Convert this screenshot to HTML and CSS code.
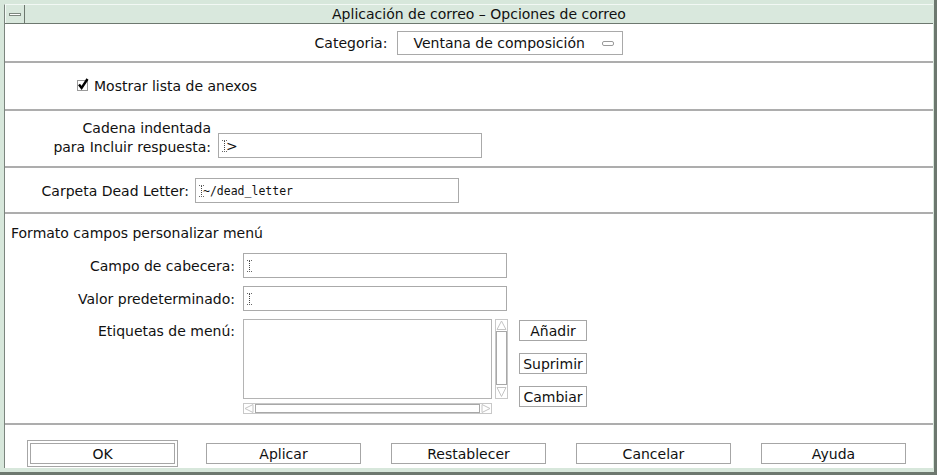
FILE: index.html
```html
<!DOCTYPE html>
<html lang="es">
<head>
<meta charset="utf-8">
<title>Aplicación de correo – Opciones de correo</title>
<link rel="stylesheet" href="styles.css">
</head>
<body>
<div class="window">
  <div class="frame">
    <div class="titlebar">
      <div class="winmenu"><span class="dash"></span></div>
      <div class="title">Aplicación de correo – Opciones de correo</div>
    </div>
    <div class="content">
      <div class="section sec-cat">
        <span class="label">Categoria:</span>
        <div class="dropdown"><span>Ventana de composición</span><span class="indicator"></span></div>
      </div>
      <div class="section sec-check">
        <div class="check">
          <svg class="checkbox" width="14" height="13" viewBox="0 0 14 13"><rect x="0.5" y="2.5" width="10" height="10" fill="#fff" stroke="#9a9a9a"/><path d="M2 6.5 L4.6 10 L10.5 1" fill="none" stroke="#000" stroke-width="2.4"/></svg>
          <span>Mostrar lista de anexos</span>
        </div>
      </div>
      <div class="section sec-indent">
        <div class="label lbl-indent">Cadena indentada<br>para Incluir respuesta:</div>
        <div class="field f264"><svg class="caret" width="5" height="12" viewBox="0 0 5 12"><path d="M0 0.5H5M0 11.5H5" stroke="#666" stroke-dasharray="1 1"/><path d="M2.5 1V11" stroke="#444" stroke-dasharray="1 1"/></svg><span class="ftext">&gt;</span></div>
      </div>
      <div class="section sec-dead">
        <div class="label lbl-dead">Carpeta Dead Letter:</div>
        <div class="field f264"><svg class="caret" width="5" height="12" viewBox="0 0 5 12"><path d="M0 0.5H5M0 11.5H5" stroke="#666" stroke-dasharray="1 1"/><path d="M2.5 1V11" stroke="#444" stroke-dasharray="1 1"/></svg><span class="mono">~/dead_letter</span></div>
      </div>
      <div class="section sec-format">
        <div class="sec-title">Formato campos personalizar menú</div>
        <div class="grid">
          <div class="label glabel">Campo de cabecera:</div>
          <div class="field f264"><svg class="caret" width="5" height="12" viewBox="0 0 5 12"><path d="M0 0.5H5M0 11.5H5" stroke="#666" stroke-dasharray="1 1"/><path d="M2.5 1V11" stroke="#444" stroke-dasharray="1 1"/></svg></div>
          <div class="label glabel">Valor predeterminado:</div>
          <div class="field f264"><svg class="caret" width="5" height="12" viewBox="0 0 5 12"><path d="M0 0.5H5M0 11.5H5" stroke="#666" stroke-dasharray="1 1"/><path d="M2.5 1V11" stroke="#444" stroke-dasharray="1 1"/></svg></div>
          <div class="label glabel top">Etiquetas de menú:</div>
          <div class="listrow">
            <div class="listcol">
              <div class="listbox"></div>
              <svg class="hscroll" width="249" height="11" viewBox="0 0 249 11">
                <rect x="0.5" y="0.5" width="248" height="10" fill="#fff" stroke="#c8c8c8"/>
                <path d="M10 1.5 L2 5.5 L10 9.5 Z" fill="#fff" stroke="#c4c4c4"/>
                <rect x="12.5" y="1.5" width="224" height="8" fill="#fff" stroke="#a8a8a8"/>
                <path d="M239 1.5 L247 5.5 L239 9.5 Z" fill="#fff" stroke="#c4c4c4"/>
              </svg>
            </div>
            <svg class="vscroll" width="13" height="80" viewBox="0 0 13 80">
              <rect x="0.5" y="0.5" width="12" height="79" fill="#fff" stroke="#c8c8c8"/>
              <path d="M6.5 2 L11 10.5 L2 10.5 Z" fill="#fff" stroke="#c4c4c4"/>
              <rect x="1.5" y="12.5" width="10" height="53" fill="#fff" stroke="#a8a8a8"/>
              <path d="M2 68.5 L11 68.5 L6.5 77.5 Z" fill="#fff" stroke="#c4c4c4"/>
            </svg>
            <div class="sidebtns">
              <div class="btn small">Añadir</div>
              <div class="btn small">Suprimir</div>
              <div class="btn small">Cambiar</div>
            </div>
          </div>
        </div>
      </div>
      <div class="section sec-buttons">
        <div class="default"><div class="btn big ok">OK</div></div>
        <div class="btn big">Aplicar</div>
        <div class="btn big">Restablecer</div>
        <div class="btn big">Cancelar</div>
        <div class="btn big help">Ayuda</div>
      </div>
    </div>
  </div>
</div>
</body>
</html>
```
FILE: styles.css
```css
* { box-sizing: border-box; }
html, body { margin: 0; padding: 0; }
body {
  width: 937px;
  height: 475px;
  overflow: hidden;
  background: #d7e7db;
  font-family: "DejaVu Sans", sans-serif;
  font-size: 14px;
  color: #111;
}
.window {
  width: 937px;
  height: 475px;
  background: #d7e7db;
  padding: 4px 1px 4px 4px;
  border-right: 3px solid #6d786f;
  border-bottom: 3px solid #6d786f;
  display: flex;
}
.frame {
  flex: 1;
  display: flex;
  flex-direction: column;
  border-left: 1px solid #7b857e;
  border-top: 1px solid #f2f8f4;
}
.titlebar {
  height: 19px;
  display: flex;
  background: #d9e8dd;
  border-bottom: 1px solid #6d786f;
}
.winmenu {
  width: 20px;
  border-left: 1px solid #f4faf6;
  border-right: 1px solid #6d786f;
  display: flex;
  align-items: center;
  justify-content: center;
}
.dash {
  width: 12px;
  height: 3px;
  background: #fff;
  border: 1px solid #7d877f;
}
.title {
  flex: 1;
  text-align: center;
  line-height: 18px;
  color: #111;
}
.content {
  flex: 1;
  background: #fff;
  display: flex;
  flex-direction: column;
}
.section {
  border-bottom: 2px solid #adadad;
  display: flex;
}
.label { white-space: nowrap; }

.sec-cat {
  height: 39px;
  align-items: center;
  justify-content: center;
  gap: 10px;
  padding-top: 1px;
}
.dropdown {
  width: 226px;
  height: 24px;
  border: 1px solid #a9a9a9;
  display: flex;
  align-items: center;
  padding: 0 8px 0 15px;
}
.indicator {
  margin-left: auto;
  width: 12px;
  height: 5px;
  border: 1px solid #9a9a9a;
  border-radius: 2px;
  background: #fff;
}

.sec-check {
  height: 48px;
  align-items: center;
  padding-left: 72px;
  padding-bottom: 1px;
}
.check { display: flex; align-items: center; gap: 3px; }
.checkbox { margin-top: -2px; }

.field {
  height: 25px;
  border: 1px solid #aaaaaa;
  display: flex;
  align-items: center;
  padding-left: 3px;
}
.f264 { width: 264px; }
.caret { flex: none; }
.ftext { margin-left: -1px; }
.mono {
  font-family: "DejaVu Sans Mono", monospace;
  font-size: 11.5px;
  margin-left: -1px;
}

.sec-indent {
  height: 57px;
  align-items: flex-end;
  padding-bottom: 8px;
  gap: 7px;
}
.lbl-indent {
  width: 206px;
  text-align: right;
  line-height: 19px;
  padding-bottom: 1px;
}

.sec-dead {
  height: 46px;
  align-items: center;
  gap: 6px;
  padding-top: 1px;
}
.lbl-dead { width: 184px; text-align: right; }

.sec-format {
  height: 211px;
  flex-direction: column;
  padding-top: 10px;
}
.sec-title {
  padding-left: 6px;
  line-height: 18px;
  margin-bottom: 11px;
}
.grid {
  display: grid;
  grid-template-columns: 230px auto;
  column-gap: 8px;
  row-gap: 8px;
  align-items: center;
}
.glabel { text-align: right; }
.glabel.top { align-self: start; margin-top: 4px; }
.listrow { display: flex; align-items: flex-start; }
.listcol { display: flex; flex-direction: column; gap: 4px; }
.listbox {
  width: 249px;
  height: 80px;
  border: 1px solid #b4b4b4;
}
.vscroll { margin-left: 3px; }
.sidebtns {
  margin-left: 11px;
  margin-top: 1px;
  display: flex;
  flex-direction: column;
  gap: 12px;
}
.btn {
  border: 1px solid #a6a6a6;
  background: #fff;
  display: flex;
  align-items: center;
  justify-content: center;
  white-space: nowrap;
}
.btn.small { width: 68px; height: 21px; }

.sec-buttons {
  flex: 1;
  border-bottom: none;
  align-items: flex-start;
  padding-top: 15px;
  padding-left: 22px;
}
.default {
  border: 1px solid #a6a6a6;
  padding: 2px;
  margin-right: 28px;
}
.btn.big { width: 155px; height: 21px; margin-top: 3px; }
.btn.ok { width: 145px; margin-top: 0; }
.btn.big.help { width: 145px; }
.sec-buttons > .btn.big + .btn.big { margin-left: 30px; }
```
